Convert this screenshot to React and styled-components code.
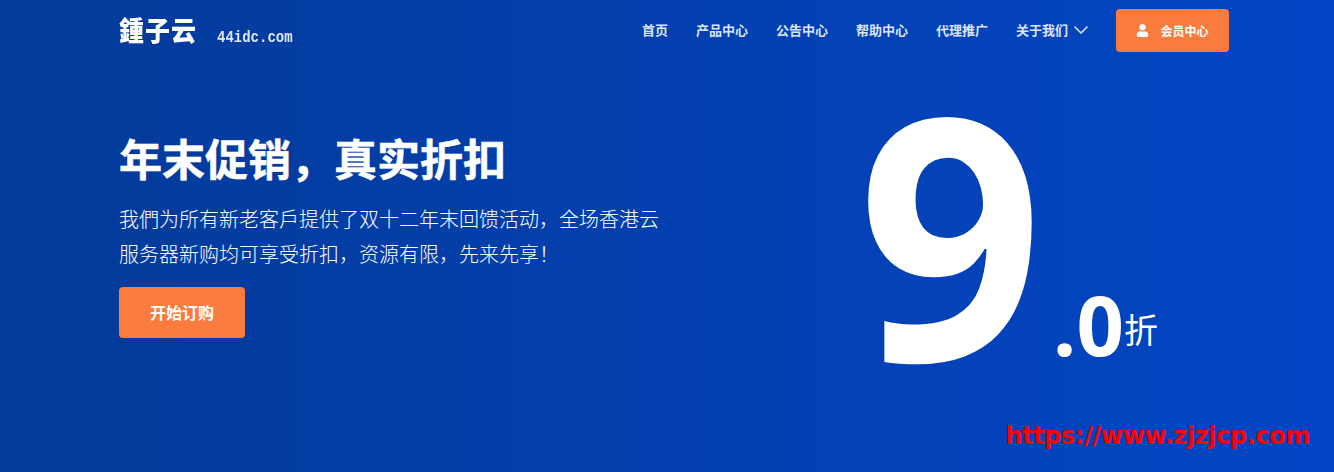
import React from "react";
import styled, { createGlobalStyle } from "styled-components";
import { FaUser } from "react-icons/fa";
import { FiChevronDown } from "react-icons/fi";

const Global = createGlobalStyle`
  html, body {
    margin: 0;
    padding: 0;
  }
  body {
    font-family: "Noto Sans CJK SC", "Noto Sans", sans-serif;
    color: #fff;
  }
`;

const links = ["首页", "产品中心", "公告中心", "帮助中心", "代理推广"];

const App = () => {
  return (
    <Hero>
      <Global />
      <Header>
        <Logo>
          <LogoMark>鍾子云</LogoMark>
          <LogoDomain>44idc.com</LogoDomain>
        </Logo>
        <Nav>
          {links.map((name) => (
            <NavLink key={name}>{name}</NavLink>
          ))}
          <NavLink>
            关于我们
            <Chevron />
          </NavLink>
          <MemberButton>
            <FaUser size={13} />
            会员中心
          </MemberButton>
        </Nav>
      </Header>
      <Banner>
        <Intro>
          <Title>{"年末促销\uFF0C真实折扣"}</Title>
          <Text>
            {"我們为所有新老客戶提供了双十二年末回馈活动\uFF0C全场香港云服务器新购均可享受折扣\uFF0C资源有限\uFF0C先来先享\uFF01"}
          </Text>
          <OrderButton>开始订购</OrderButton>
        </Intro>
        <Discount>
          <Big>9</Big>
          <Small>.0</Small>
          <Unit>折</Unit>
        </Discount>
      </Banner>
      <Watermark>https://www.zjzjcp.com</Watermark>
    </Hero>
  );
};

export default App;

const Hero = styled.div`
  position: relative;
  width: 1334px;
  height: 472px;
  overflow: hidden;
  background: linear-gradient(90deg, #043a98 0%, #0345c5 100%);
`;
const Header = styled.header`
  display: flex;
  align-items: flex-start;
  justify-content: space-between;
  padding: 9px 105px 0 119px;
`;
const Logo = styled.div`
  display: flex;
  align-items: flex-end;
  gap: 20px;
  height: 38px;
  filter: blur(0.3px);
`;
const LogoMark = styled.span`
  font-size: 25px;
  line-height: 36px;
  font-weight: 900;
  letter-spacing: 1px;
  transform: scaleY(1.1);
`;
const LogoDomain = styled.span`
  font-family: "Liberation Mono", monospace;
  font-size: 14px;
  line-height: 20px;
  font-weight: 700;
  color: #dfe8f7;
  transform: scaleY(1.2);
`;
const Nav = styled.nav`
  display: flex;
  align-items: flex-start;
  height: 43px;
  gap: 28px;
`;
const NavLink = styled.a`
  display: flex;
  align-items: center;
  gap: 1px;
  height: 41px;
  font-size: 13px;
  font-weight: 700;
  color: #dbe5f6;
`;
const Chevron = styled(FiChevronDown)`
  width: 24px;
  height: 24px;
  margin-right: -5px;
  stroke-width: 1.6;
`;
const MemberButton = styled.a`
  display: flex;
  align-items: center;
  justify-content: center;
  gap: 11px;
  width: 113px;
  height: 43px;
  border-radius: 4px;
  background: #fa7b3e;
  font-size: 12px;
  font-weight: 700;
  color: #fff;
`;
const Banner = styled.main`
  display: flex;
  justify-content: space-between;
  padding: 0 176px 0 119px;
`;
const Intro = styled.div`
  width: 560px;
  padding-top: 74px;
`;
const Title = styled.h1`
  margin: 0;
  font-size: 43px;
  line-height: 62px;
  font-weight: 700;
  -webkit-text-stroke: 0.6px #fff;
`;
const Text = styled.p`
  width: 545px;
  margin: 13px 0 16px;
  font-size: 20px;
  line-height: 35px;
  font-weight: 300;
  color: #fff;
`;
const OrderButton = styled.a`
  display: flex;
  align-items: center;
  justify-content: center;
  width: 126px;
  height: 51px;
  padding-bottom: 2px;
  box-sizing: border-box;
  border-radius: 4px;
  background: #fa7b3e;
  font-size: 16px;
  font-weight: 700;
`;
const Discount = styled.div`
  display: flex;
  align-items: flex-start;
  font-family: "Open Sans", sans-serif;
  font-weight: 700;
`;
const Big = styled.span`
  margin-top: 9px;
  font-size: 338px;
  line-height: 338px;
  transform: scaleX(0.96);
  transform-origin: right center;
`;
const Small = styled.span`
  margin: 230px 0 0 10px;
  font-size: 83px;
  line-height: 83px;
`;
const Unit = styled.span`
  margin-top: 260px;
  font-family: "Noto Sans CJK SC", sans-serif;
  font-size: 34px;
  line-height: 34px;
  font-weight: 400;
`;
const Watermark = styled.span`
  position: absolute;
  right: 24px;
  bottom: 22px;
  font-family: "DejaVu Sans", sans-serif;
  font-size: 24px;
  font-weight: 700;
  letter-spacing: -0.4px;
  color: #fe0000;
`;
